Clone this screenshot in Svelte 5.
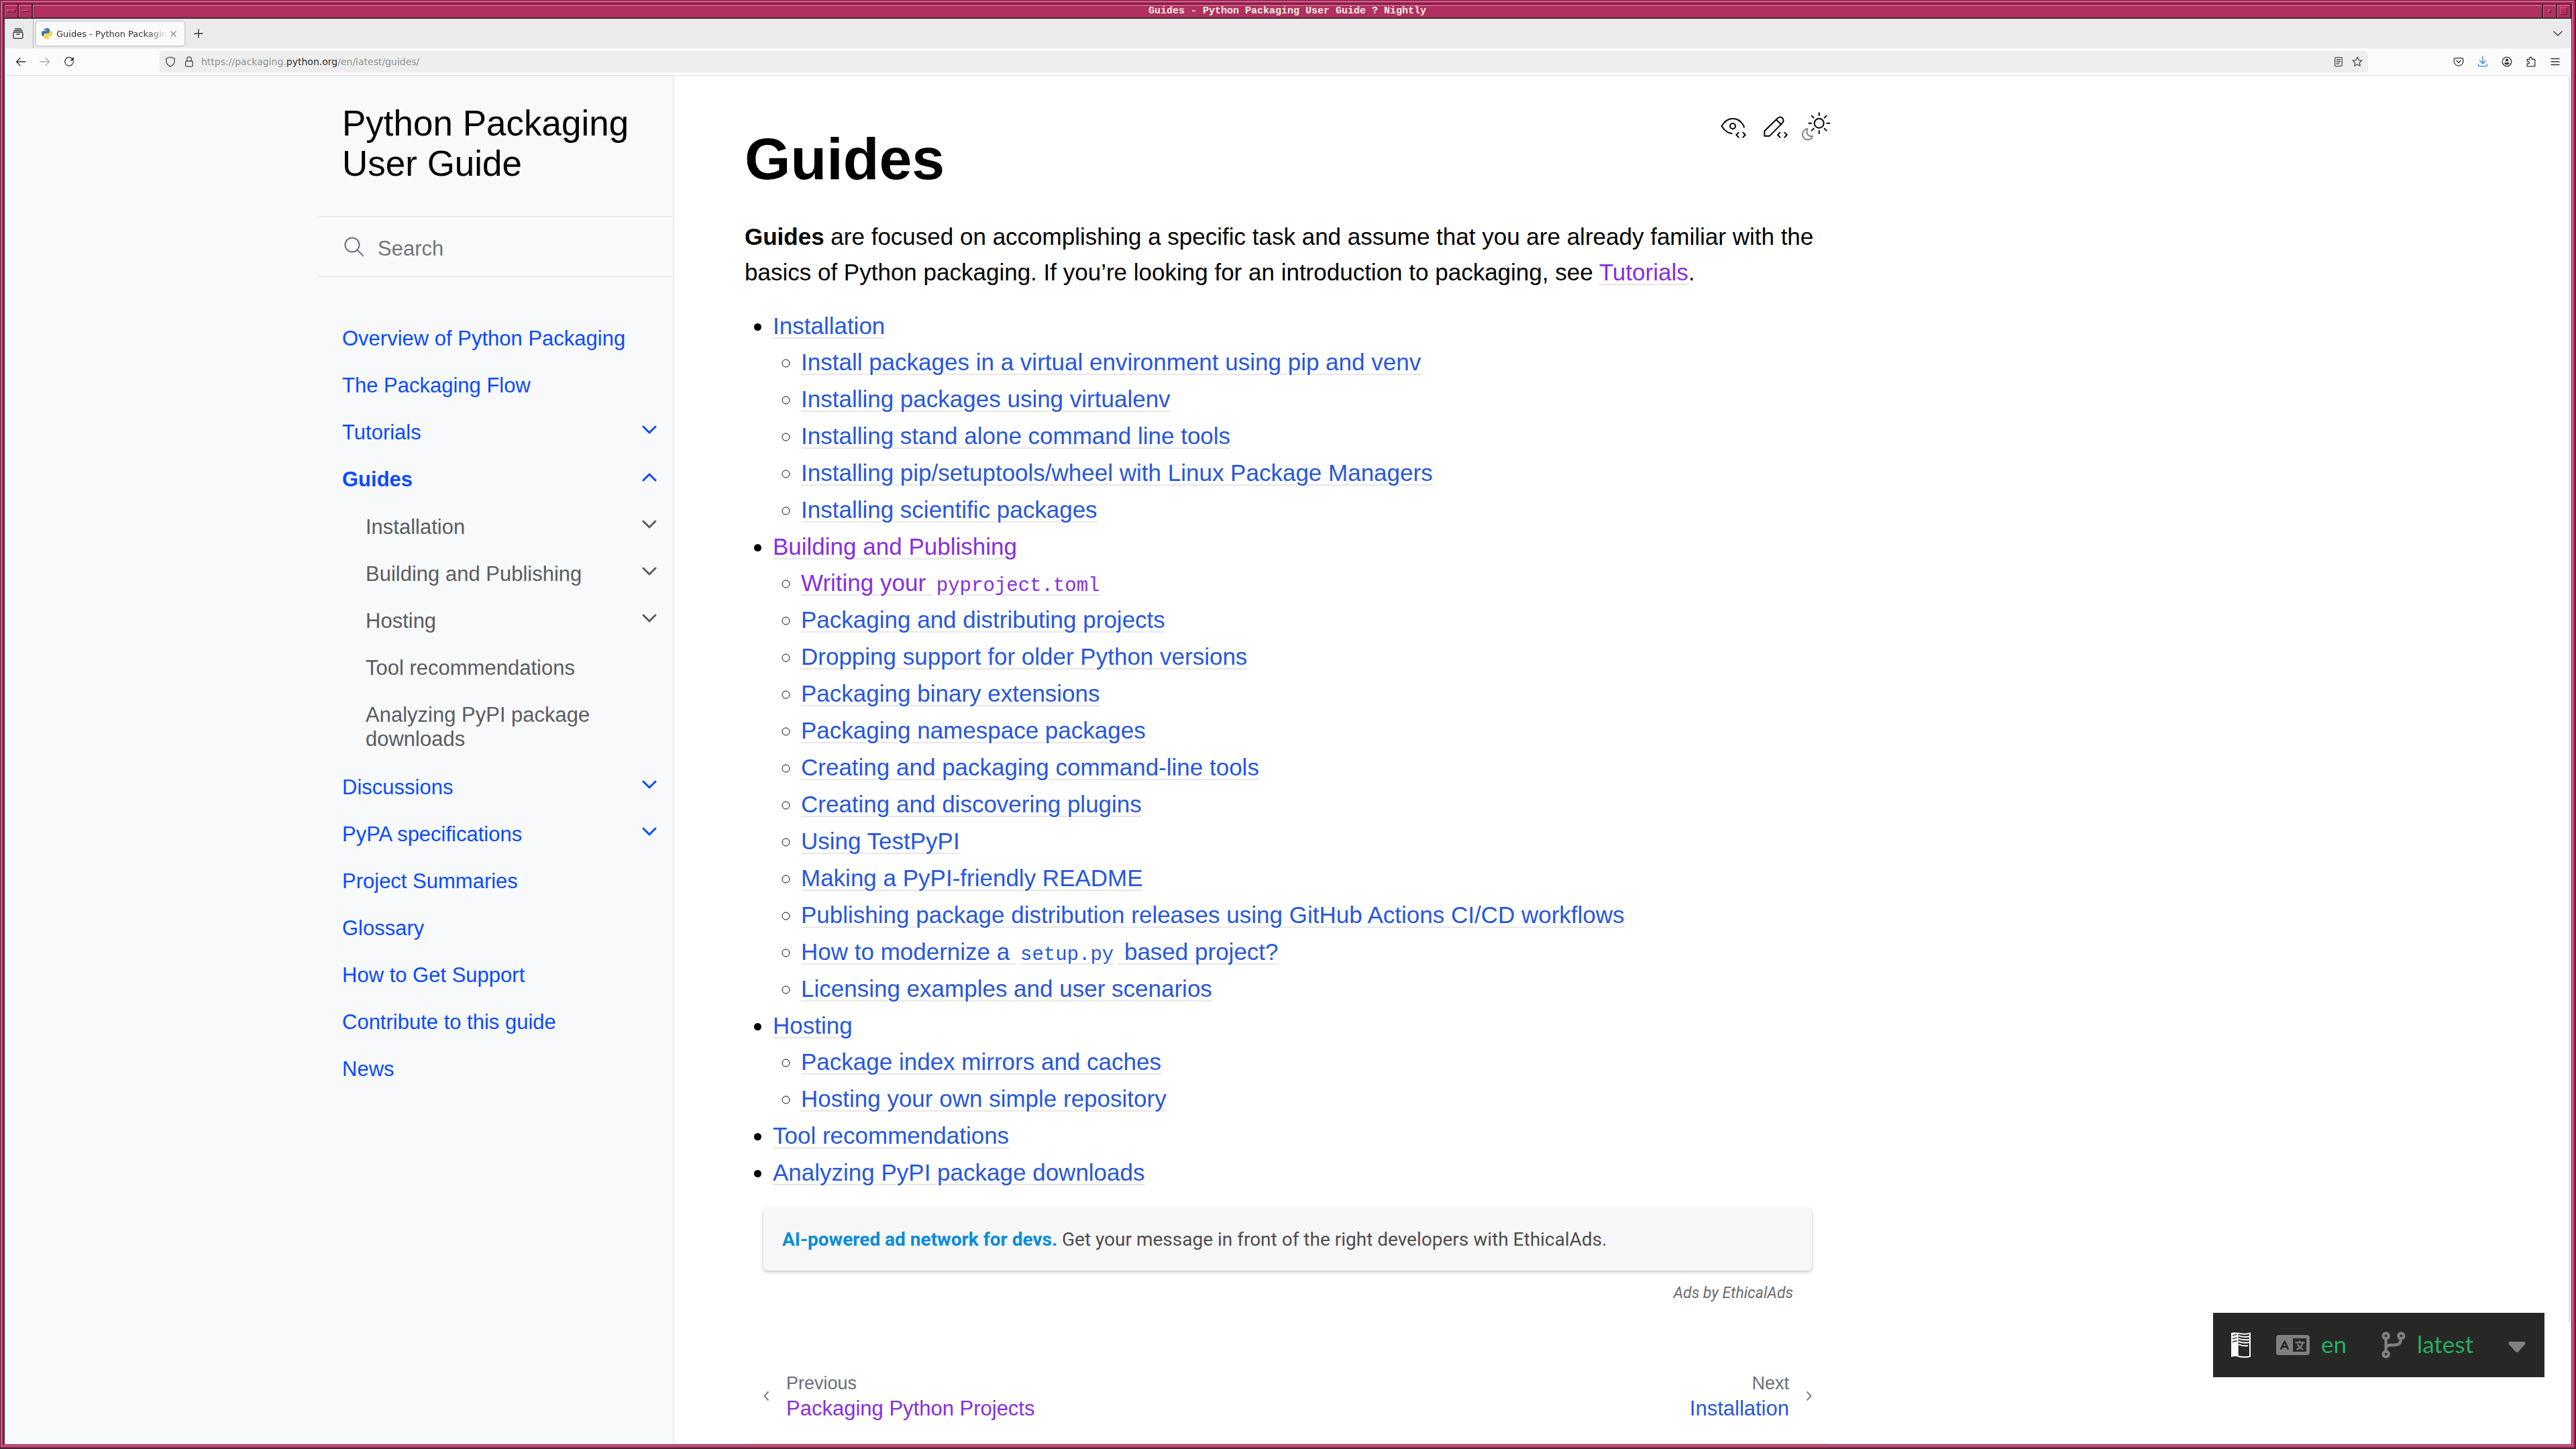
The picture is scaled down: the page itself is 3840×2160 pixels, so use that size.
<script>
  const navTop = [
    { title: 'Overview of Python Packaging' },
    { title: 'The Packaging Flow' },
    { title: 'Tutorials', expandable: true },
    {
      title: 'Guides',
      expandable: true,
      open: true,
      children: [
        { title: 'Installation', expandable: true },
        { title: 'Building and Publishing', expandable: true },
        { title: 'Hosting', expandable: true },
        { title: 'Tool recommendations' },
        { title: 'Analyzing PyPI package downloads' }
      ]
    },
    { title: 'Discussions', expandable: true },
    { title: 'PyPA specifications', expandable: true },
    { title: 'Project Summaries' },
    { title: 'Glossary' },
    { title: 'How to Get Support' },
    { title: 'Contribute to this guide' },
    { title: 'News' }
  ];

  const toc = [
    {
      title: 'Installation',
      children: [
        { title: 'Install packages in a virtual environment using pip and venv' },
        { title: 'Installing packages using virtualenv' },
        { title: 'Installing stand alone command line tools' },
        { title: 'Installing pip/setuptools/wheel with Linux Package Managers' },
        { title: 'Installing scientific packages' }
      ]
    },
    {
      title: 'Building and Publishing',
      visited: true,
      children: [
        { title: 'Writing your ', code: 'pyproject.toml', visited: true },
        { title: 'Packaging and distributing projects' },
        { title: 'Dropping support for older Python versions' },
        { title: 'Packaging binary extensions' },
        { title: 'Packaging namespace packages' },
        { title: 'Creating and packaging command-line tools' },
        { title: 'Creating and discovering plugins' },
        { title: 'Using TestPyPI' },
        { title: 'Making a PyPI-friendly README' },
        { title: 'Publishing package distribution releases using GitHub Actions CI/CD workflows' },
        { title: 'How to modernize a ', code: 'setup.py', after: ' based project?' },
        { title: 'Licensing examples and user scenarios' }
      ]
    },
    {
      title: 'Hosting',
      children: [
        { title: 'Package index mirrors and caches' },
        { title: 'Hosting your own simple repository' }
      ]
    },
    { title: 'Tool recommendations' },
    { title: 'Analyzing PyPI package downloads' }
  ];
</script>

{#snippet navItems(items)}
  {#each items as item}
    <li>
      <div class="nav-row">
        <a href="#top" class:current={item.open}>{item.title}</a>
        {#if item.expandable}
          <button class="toggle" class:open={item.open} aria-label="Toggle {item.title}">
            <svg viewBox="0 0 22 14" width="22" height="14"><path d="M2 2l9 9 9-9" /></svg>
          </button>
        {/if}
      </div>
      {#if item.children}
        <ul class="nav-sub">{@render navItems(item.children)}</ul>
      {/if}
    </li>
  {/each}
{/snippet}

{#snippet tocItems(items)}
  {#each items as item}
    <li>
      <a href="#top" class:visited={item.visited}>{item.title}{#if item.code}<code>{item.code}</code>{/if}{item.after ?? ''}</a>
      {#if item.children}
        <ul>{@render tocItems(item.children)}</ul>
      {/if}
    </li>
  {/each}
{/snippet}

<div class="frame edge-outer">
  <div class="frame edge-light">
    <div class="frame edge-mid">
      <div class="frame edge-inner">
        <div class="titlebar">
          <button class="wm" aria-label="Window menu"><i class="bar"></i></button>
          <button class="wm" aria-label="Shade"><i class="dash"></i></button>
          <div class="wm-title">Guides - Python Packaging User Guide ? Nightly</div>
          <button class="wm" aria-label="Minimize"><i class="dot"></i></button>
          <button class="wm" aria-label="Maximize"><i class="square"></i></button>
        </div>

        <div class="tabbar">
          <button class="view-btn" aria-label="View browsing history">
            <svg class="ic" viewBox="0 0 16 16"><rect x="1" y="6" width="14" height="9.3" rx="1.8" /><path d="M3.5 1h9M1.7 4.2q.6-.7 1.6-.7h9.400q1 0 1.600.7M6 9h4" /></svg>
          </button>
          <div class="tab">
            <svg class="favicon" viewBox="0 0 24 24" width="16" height="16">
              <path fill="#3b74a6" d="M14.25.18l.9.2.73.26.59.3.45.32.34.34.25.34.16.33.1.3.04.26.02.2-.01.13V8.5l-.05.63-.13.55-.21.46-.26.38-.3.31-.33.25-.35.19-.35.14-.33.1-.3.07-.26.04-.21.02H8.77l-.69.05-.59.14-.5.22-.41.27-.33.32-.27.35-.2.36-.15.37-.1.35-.07.32-.04.27-.02.21v3.06H3.17l-.21-.03-.28-.07-.32-.12-.35-.18-.36-.26-.36-.36-.35-.46-.32-.59-.28-.73-.21-.88-.14-1.05-.05-1.23.06-1.22.16-1.04.24-.87.32-.71.36-.57.4-.44.42-.33.42-.24.4-.16.36-.1.32-.05.24-.01h.16l.06.01h8.16v-.83H6.18l-.01-2.75-.02-.37.05-.34.11-.31.17-.28.25-.26.31-.23.38-.2.44-.18.51-.15.58-.12.64-.1.71-.06.77-.04.84-.02 1.27.05zm-6.3 1.98l-.23.33-.08.41.08.41.23.34.33.22.41.09.41-.09.33-.22.23-.34.08-.41-.08-.41-.23-.33-.33-.22-.41-.09-.41.09z" />
              <path fill="#ffd43b" d="M21.04 6.11l.28.06.32.12.35.18.36.27.36.35.35.47.32.59.28.73.21.88.14 1.04.05 1.23-.06 1.23-.16 1.04-.24.86-.32.71-.36.57-.4.45-.42.33-.42.24-.4.16-.36.09-.32.05-.24.02-.16-.01h-8.22v.82h5.84l.01 2.76.02.36-.05.34-.11.31-.17.29-.25.25-.31.24-.38.2-.44.17-.51.15-.58.13-.64.09-.71.07-.77.04-.84.01-1.27-.04-1.07-.14-.9-.2-.73-.25-.59-.3-.45-.33-.34-.34-.25-.34-.16-.33-.1-.3-.04-.25-.02-.2.01-.13v-5.34l.05-.64.13-.54.21-.46.26-.38.3-.32.33-.24.35-.2.35-.14.33-.1.3-.06.26-.04.21-.02.13-.01h5.84l.69-.05.59-.14.5-.21.41-.28.33-.32.27-.35.2-.36.15-.36.1-.35.07-.32.04-.28.02-.21V6.07h2.09l.14.01zm-6.47 14.25l-.23.33-.08.41.08.41.23.33.33.23.41.08.41-.08.33-.23.23-.33.08-.41-.08-.41-.23-.33-.33-.23-.41-.08-.41.08z" />
            </svg>
            <span class="tab-title">Guides - Python Packaging User Guide</span>
            <button class="tab-close" aria-label="Close tab">
              <svg viewBox="0 0 9 9" width="9" height="9"><path d="M.5.5l8 8M8.500.5l-8 8" /></svg>
            </button>
          </div>
          <button class="new-tab" aria-label="New tab">
            <svg class="ic" viewBox="0 0 16 16"><path d="M8 2v12M2 8h12" /></svg>
          </button>
          <button class="all-tabs" aria-label="List all tabs">
            <svg class="ic" viewBox="0 0 16 16"><path d="M2 5l6 6 6-6" /></svg>
          </button>
        </div>

        <div class="toolbar">
          <button aria-label="Back"><svg class="ic" viewBox="0 0 16 16"><path d="M15 8H2M7 2.500L1.500 8 7 13.500" /></svg></button>
          <button aria-label="Forward" class="dim"><svg class="ic" viewBox="0 0 16 16"><path d="M1 8h13M9 2.500L14.500 8 9 13.500" /></svg></button>
          <button aria-label="Reload"><svg class="ic" viewBox="0 0 16 16"><path d="M12.800 3.600A6.300 6.300 0 1 0 14.300 8.500" /><path class="solid" d="M15 .8v5.700H9.300z" /></svg></button>
          <div class="urlbar">
            <svg class="ic" viewBox="0 0 16 16"><path d="M8 1l6.200 2.200v3.300c0 4-2.400 7-6.200 8.700C4.200 13.500 1.800 10.500 1.800 6.500V3.200z" /></svg>
            <svg class="ic lock" viewBox="0 0 16 16"><rect x="2.700" y="7" width="10.600" height="8.200" rx="1.500" /><path d="M4.700 7V4.200a3.300 3.300 0 0 1 6.600 0V7" /></svg>
            <div class="url">https://packaging.<b>python.org</b>/en/latest/guides/</div>
            <svg class="ic" viewBox="0 0 16 16"><rect x="2.700" y="1.700" width="10.600" height="13" rx="1.500" /><path d="M5.200 5h5.600M5.200 8h5.600M5.200 11h3.600" /></svg>
            <svg class="ic star" viewBox="0 0 16 16"><path d="M8 1.200l2 4.400 4.900.6-3.600 3.300.9 4.900L8 12l-4.200 2.400.9-4.900L1.100 6.200 6 5.600z" /></svg>
          </div>
          <button aria-label="Save to Pocket"><svg class="ic" viewBox="0 0 16 16"><path d="M2.600 2.700h10.800q1.300 0 1.300 1.300v3.400a6.700 6.700 0 0 1-13.400 0V4q0-1.300 1.300-1.300zM5 6.500l3 3 3-3" /></svg></button>
          <button aria-label="Downloads" class="blue"><svg class="ic" viewBox="0 0 16 16"><path d="M8 .5v10M3.500 6.300L8 10.800l4.500-4.500M1.700 12v1.300q0 1.400 1.400 1.400h9.800q1.400 0 1.400-1.400V12" /></svg></button>
          <button aria-label="Account"><svg class="ic" viewBox="0 0 16 16"><circle cx="8" cy="8" r="6.800" /><circle class="solid" cx="8" cy="5.600" r="2.200" /><path class="solid" d="M4.200 9.300h7.600c0 2.200-1.800 3.300-3.800 3.300s-3.800-1.100-3.800-3.300z" /></svg></button>
          <button aria-label="Extensions"><svg class="ic" viewBox="0 0 16 16"><path d="M2.200 14.800V11h1.300a1.700 1.700 0 0 0 0-3.700H2.200V4.500h3.600V3a1.700 1.700 0 0 1 3.500 0v1.500h4.500v3.700M13.800 8v6.800H2.200" /></svg></button>
          <button aria-label="Application menu"><svg class="ic" viewBox="0 0 16 16"><path d="M2 3.500h12M2 8h12M2 12.500h12" /></svg></button>
        </div>

        <div class="page" id="top">
          <aside class="sidebar">
            <div class="sidebar-inner">
              <a class="brand" href="#top">Python Packaging User Guide</a>
              <label class="search">
                <svg viewBox="0 0 30 30" width="30" height="30"><circle cx="12" cy="12" r="10.500" /><path d="M19.500 19.500l9 9" /></svg>
                <input type="text" placeholder="Search" aria-label="Search" />
              </label>
              <nav>
                <ul>{@render navItems(navTop)}</ul>
              </nav>
            </div>
          </aside>

          <main>
            <div class="content">
              <header>
                <h1>Guides</h1>
                <div class="actions">
                  <a href="#top" aria-label="View this page">
                    <svg viewBox="75 75 120 135" width="40" height="45"><path d="M128 177q-26-3-46-33 20-34 50-34 32 0 50 34v5" /><circle cx="132" cy="144" r="12" /><path d="M158 173l-10 10 10 11M178 173l10 10-10 11" /></svg>
                  </a>
                  <a href="#top" aria-label="Edit this page">
                    <svg viewBox="255 75 123 135" width="41" height="45"><path d="M274 188v-22l57-56q12-12 23-2 10 12-1 23l-56 57zM326 115l23 22M343 173l-10 10 10 11M364 173l10 10-10 11" /></svg>
                  </a>
                  <button aria-label="Toggle Light / Dark / Auto color theme">
                    <svg viewBox="438 75 132 135" width="44" height="45"><circle cx="518" cy="131" r="21" /><path d="M518 85v12M518 165v12M472 131h12M553 131h12M485 98l9 9M542 155l9 9M551 98l-9 9M494 155l-9 9" /><path class="moon" d="M466 156c-14 2-22 13-22 25 0 14 10 24 23 24 10 0 19-6 22-16-18 5-32-14-23-33z" /></svg>
                  </button>
                </div>
              </header>

              <p>
                <strong>Guides</strong> are focused on accomplishing a specific task and assume that you are already familiar with the basics of Python packaging. If you’re looking for an introduction to packaging, see <a href="#top" class="visited">Tutorials</a>.
              </p>

              <ul class="toc">{@render tocItems(toc)}</ul>

              <div class="ad">
                <div class="ad-box">
                  <a href="#top"><strong>AI-powered ad network for devs.</strong> Get your message in front of the right developers with EthicalAds.</a>
                </div>
                <a class="ad-by" href="#top">Ads by EthicalAds</a>
              </div>

              <footer>
                <a href="#top" class="prev">
                  <svg viewBox="0 0 9 16" width="9" height="16"><path d="M7.500 1.500L1.500 8l6 6.500" /></svg>
                  <span><small>Previous</small><span class="page-title visited">Packaging Python Projects</span></span>
                </a>
                <a href="#top" class="next">
                  <span><small>Next</small><span class="page-title">Installation</span></span>
                  <svg viewBox="0 0 9 16" width="9" height="16"><path d="M1.500 1.500l6 6.500-6 6.500" /></svg>
                </a>
              </footer>
            </div>
          </main>

          <button class="flyout">
            <svg class="book" viewBox="66 45 90 120" width="30" height="40">
              <path fill="#fff" d="M69 51q16-5 32 0v106q-16-5-32 2z" />
              <path class="page-edge" d="M101 52q26 8 52 0v104q-26 6-52-1" />
              <path class="page-line" d="M104 64q20 8 48 3M104 77q20 8 48 3M104 90q20 8 48 3M104 103q20 8 38 5" />
              <path class="page-mark" d="M76 63q8-4 18-4M76 77q8-4 18-4M76 91q8-4 18-4" />
            </svg>
            <span class="group">
              <svg viewBox="270 63 150 90" width="50" height="30">
                <path fill="#808080" fill-rule="evenodd" d="M282 63h126q12 0 12 12v66q0 12-12 12H282q-12 0-12-12V75q0-12 12-12zM345 78v60h60V78z" />
                <path class="a" d="M292 125l16-33 15 33M299 116h18" />
                <path class="b" d="M358 97h37M376 91v6M389 98q-5 20-25 29M367 107q8 13 21 20" />
              </svg>
              <span class="label">en</span>
            </span>
            <span class="group">
              <svg viewBox="746 48 108 120" width="36" height="40">
                <path class="branch" d="M766 67v82M833 67v12q0 29-28 29h-15q-24 0-24 16" />
                <g class="node"><circle cx="766" cy="67" r="12" /><circle cx="834" cy="67" r="12" /><circle cx="766" cy="149" r="12" /></g>
              </svg>
              <span class="label">latest</span>
            </span>
            <svg class="caret" viewBox="0 0 26 16" width="26" height="16"><path d="M2 0h22q3 2 1 4L15 15q-2 1.500-4 0L1 4q-2-2 1-4z" /></svg>
          </button>

          <div class="scrollbar"></div>
        </div>
      </div>
    </div>
  </div>
</div>

<style>
  :global(body) {
    margin: 0;
    font-family: 'Liberation Sans', Arial, sans-serif;
  }

  * {
    box-sizing: border-box;
  }

  a {
    text-decoration: none;
    color: #2757dd;
  }

  button {
    border: 0;
    padding: 0;
    background: none;
    font: inherit;
    color: inherit;
  }

  svg {
    display: block;
    flex: none;
  }

  ul {
    margin: 0;
    padding: 0;
  }

  /* window manager frame */
  .frame {
    display: flex;
    flex-direction: column;
    flex: 1;
    min-height: 0;
    border-style: solid;
  }

  .edge-outer {
    height: 100vh;
    border-width: 1px 2px 2px 1px;
    border-color: #462836;
  }

  .edge-light {
    border-width: 2px;
    border-color: #f04e8a #b03060 #b03060 #f04e8a;
  }

  .edge-mid {
    border-width: 2px;
    border-color: #b03060 #f04e8a #f04e8a #b03060;
  }

  .edge-inner {
    border-width: 2px 1px 1px 2px;
    border-color: #462836;
    background: #fff;
  }

  .titlebar {
    display: flex;
    height: 21px;
    background: #b03060;
    border-bottom: 2px solid #462836;
  }

  .wm {
    display: flex;
    align-items: center;
    justify-content: center;
    width: 21px;
    border: solid #462836;
    border-width: 0 2px 0 0;
    box-shadow: inset 1px 2px #f04e8a;
  }

  .wm i {
    border: 1px solid;
    border-color: #f04e8a #462836 #462836 #f04e8a;
  }

  .bar {
    width: 13px;
    height: 5px;
  }

  .dash {
    width: 9px;
    height: 3px;
  }

  .dot {
    width: 5px;
    height: 5px;
  }

  .square {
    width: 11px;
    height: 11px;
  }

  .wm-title {
    flex: 1;
    border-right: 2px solid #462836;
    box-shadow: inset 1px 2px #f04e8a;
    font: bold 15px/20px 'Liberation Mono', monospace;
    text-align: center;
    color: #fdeee0;
  }

  /* browser chrome */
  .ic {
    width: 16px;
    height: 16px;
    fill: none;
    stroke: currentColor;
    stroke-width: 1.3;
    stroke-linecap: round;
    stroke-linejoin: round;
  }

  .ic .solid {
    fill: currentColor;
    stroke: none;
  }

  .tabbar {
    display: flex;
    align-items: center;
    height: 44px;
    background: #ebebeb;
    color: #333;
    font: 13px 'DejaVu Sans', sans-serif;
  }

  .view-btn {
    height: 44px;
    padding: 0 14px 0 12px;
    border-right: 1px solid #b5b5b5;
  }

  .tab {
    display: flex;
    align-items: center;
    width: 221px;
    height: 36px;
    margin-left: 4px;
    padding: 0 12px 0 8px;
    background: #fbfbfb;
    border-radius: 4px;
    box-shadow: 0 0 3px rgba(0, 0, 0, 0.4);
  }

  .tab-title {
    flex: 1;
    margin-left: 6px;
    overflow: hidden;
    white-space: nowrap;
    mask-image: linear-gradient(to left, transparent, #000 32px);
  }

  .tab-close {
    margin-left: 3px;
  }

  .tab-close path {
    stroke: #333;
    stroke-width: 1;
  }

  .new-tab {
    margin-left: 13px;
  }

  .all-tabs {
    margin-left: auto;
    margin-right: 12px;
  }

  .toolbar {
    display: flex;
    align-items: center;
    gap: 20px;
    height: 41px;
    padding: 0 16px;
    background: #fbfbfb;
    border-bottom: 1px solid #dedee2;
    color: #333;
  }

  .dim {
    color: #aaa;
  }

  .blue {
    color: #3584e4;
  }

  .urlbar {
    display: flex;
    flex: 1;
    align-items: center;
    height: 32px;
    margin: 0 107px;
    padding: 0 8px;
    background: #eee;
    border-radius: 4px;
    color: #4a4a4a;
    font: 14px 'DejaVu Sans', sans-serif;
  }

  .lock {
    margin-left: 12px;
  }

  .star {
    margin-left: 12px;
  }

  .url {
    flex: 1;
    margin-left: 10px;
    color: #929292;
  }

  .url b {
    font-weight: normal;
    color: #2e2e2e;
  }

  /* page */
  .page {
    position: relative;
    display: flex;
    flex: 1;
    min-height: 0;
    overflow: hidden;
    background: #fff;
  }

  .sidebar {
    display: flex;
    flex: none;
    justify-content: flex-end;
    width: calc(50% - 915px);
    min-width: 530px;
    background: #f8f9fb;
    border-right: 2px solid #eeebee;
  }

  .sidebar-inner {
    width: 528px;
  }

  .brand {
    display: block;
    padding: 41px 34px 48px 35px;
    font-size: 53px;
    line-height: 60px;
    color: #000;
  }

  .search {
    display: flex;
    align-items: center;
    height: 91px;
    padding: 0 38px;
    border: solid #eeebee;
    border-width: 2px 0;
  }

  .search svg {
    fill: none;
    stroke: #6b6f76;
    stroke-width: 2;
  }

  .search input {
    flex: 1;
    min-width: 0;
    margin-left: 20px;
    padding: 6px 0 0;
    border: 0;
    outline: 0;
    background: none;
    font: 31px 'Liberation Sans', Arial, sans-serif;
  }

  .search input::placeholder {
    color: #757575;
    opacity: 1;
  }

  nav {
    padding: 57px 24px 0 35px;
  }

  nav li {
    list-style: none;
  }

  .nav-row {
    display: flex;
    justify-content: space-between;
  }

  .nav-row a {
    padding: 17px 0;
    font-size: 31px;
    line-height: 36px;
    color: #0a4bff;
  }

  .nav-row .current {
    font-weight: bold;
  }

  .nav-sub {
    margin: 1px 0 2px;
    padding-left: 35px;
  }

  .nav-sub .nav-row a,
  .nav-sub .toggle {
    color: #5a5c63;
  }

  .toggle {
    height: 62px;
    color: #0a4bff;
  }

  .toggle path {
    fill: none;
    stroke: currentColor;
    stroke-width: 3;
    stroke-linecap: round;
    stroke-linejoin: round;
  }

  .open svg {
    transform: rotate(180deg);
  }

  main {
    flex: 1;
    padding: 52px 105px 0;
    font-size: 35px;
    line-height: 53px;
  }

  .content {
    max-width: 1619px;
  }

  header {
    display: flex;
    justify-content: space-between;
    align-items: flex-start;
  }

  h1 {
    margin: 17px 0 34px;
    font-size: 88px;
    line-height: 110px;
  }

  .actions {
    display: flex;
    gap: 20px;
  }

  .actions svg {
    fill: none;
    stroke: #000;
    stroke-width: 6;
    stroke-linecap: round;
    stroke-linejoin: round;
  }

  .actions .moon {
    stroke: #808080;
  }

  p {
    margin: 0 0 26px;
  }

  p a,
  .toc a {
    text-decoration: underline;
    text-decoration-color: #e8e6e8;
    text-decoration-thickness: 2px;
    text-underline-offset: 5px;
  }

  .visited {
    color: #872ee0;
  }

  .toc,
  .toc ul {
    padding-left: 42px;
  }

  .toc {
    line-height: 55px;
    list-style: disc;
  }

  .toc ul {
    margin-top: -1px;
    list-style: circle;
  }

  code {
    padding: 0 6px;
    font: 29px/35px 'Liberation Mono', monospace;
  }

  .ad {
    display: flex;
    flex-direction: column;
    margin: 26px 28px 98px;
    font-family: Roboto, sans-serif;
  }

  .ad-box {
    padding: 20px 28px;
    background: #f7f7f7;
    border-radius: 6px;
    box-shadow: 0 2px 5px rgba(0, 0, 0, 0.25);
    font-size: 28px;
  }

  .ad-box a {
    color: #4d4d4d;
  }

  .ad-box strong {
    color: #088cdb;
  }

  .ad-by {
    align-self: flex-end;
    margin: 17px 28px 0;
    font-size: 23px;
    font-style: italic;
    line-height: 34px;
    color: #6b6b6b;
  }

  footer {
    display: flex;
    justify-content: space-between;
    padding: 0 28px 32px;
    border-bottom: 2px solid #eeebee;
    font-size: 31px;
    line-height: 38px;
  }

  footer a {
    display: flex;
    align-items: center;
    gap: 25px;
  }

  footer svg {
    fill: none;
    stroke: #808080;
    stroke-width: 2;
  }

  footer small,
  .page-title {
    display: block;
  }

  footer small {
    font-size: 27px;
    color: #6b6f76;
  }

  .next {
    text-align: right;
  }

  .flyout {
    position: absolute;
    right: 40px;
    bottom: 100px;
    display: flex;
    align-items: center;
    gap: 52px;
    height: 96px;
    padding: 0 28px 0 26px;
    background: #272725;
    color: #27ae60;
    font: 35px Lato, sans-serif;
  }

  .book {
    margin-right: -14px;
  }

  .flyout path,
  .flyout circle {
    stroke-linecap: round;
    stroke-linejoin: round;
  }

  .page-edge,
  .page-line {
    fill: none;
    stroke: #fff;
    stroke-width: 6;
  }

  .page-mark {
    fill: none;
    stroke: #272725;
    stroke-width: 4;
  }

  .group {
    display: flex;
    align-items: center;
    gap: 17px;
  }

  .label {
    padding-bottom: 4px;
  }

  .a {
    fill: none;
    stroke: #272725;
    stroke-width: 8;
  }

  .b {
    fill: none;
    stroke: #808080;
    stroke-width: 7;
  }

  .branch,
  .node {
    fill: none;
    stroke: #808080;
    stroke-width: 13;
  }

  .node {
    fill: #272725;
  }

  .caret {
    margin-top: 6px;
    fill: #808080;
  }

  .scrollbar {
    position: absolute;
    top: 2px;
    right: 1px;
    width: 3px;
    height: 91%;
    background: #e0e0e0;
    border-radius: 2px;
  }
</style>
